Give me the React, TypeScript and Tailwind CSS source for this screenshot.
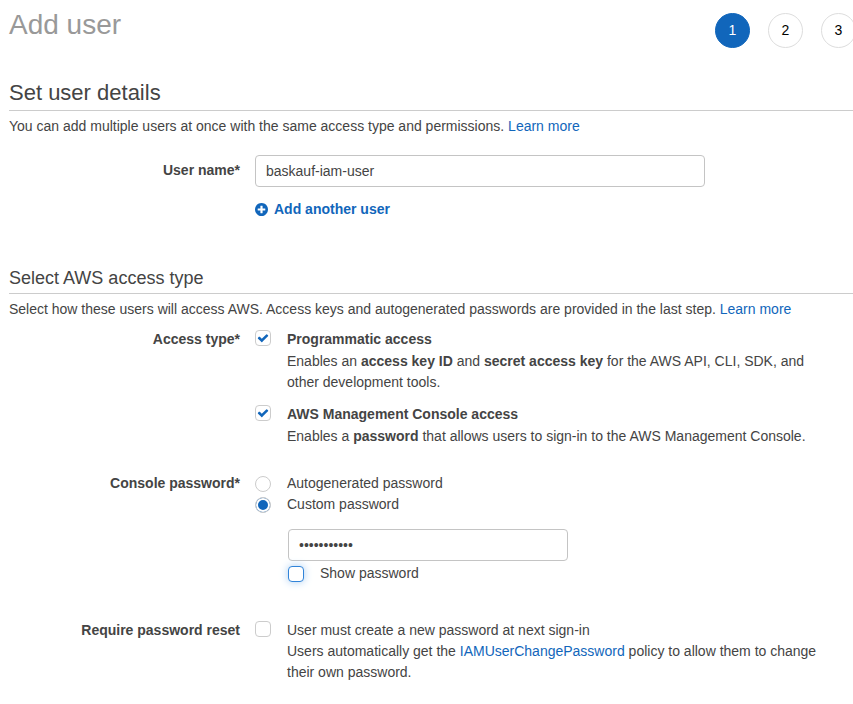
import { useState, type InputHTMLAttributes, type ReactNode } from 'react';

function PlusCircle() {
  return (
    <svg viewBox="128 128 1536 1536" className="size-[13px] fill-current" aria-hidden="true">
      <path d="M1344 960v-128q0-26-19-45t-45-19h-256v-256q0-26-19-45t-45-19h-128q-26 0-45 19t-19 45v256h-256q-26 0-45 19t-19 45v128q0 26 19 45t45 19h256v256q0 26 19 45t45 19h128q26 0 45-19t19-45v-256h256q26 0 45-19t19-45zm320-64q0 209-103 385.500t-279.500 279.500-385.500 103-385.500-103-279.500-279.500-103-385.500 103-385.500 279.500-279.500 385.500-103 385.500 103 279.500 279.500 103 385.500z" />
    </svg>
  );
}

function Checkbox({ highlighted = false, ...props }: InputHTMLAttributes<HTMLInputElement> & { highlighted?: boolean }) {
  return (
    <span className="mt-px grid size-4 shrink-0">
      <input
        type="checkbox"
        className={`peer col-start-1 row-start-1 size-4 appearance-none rounded border bg-white ${
          highlighted ? 'border-[#3184d9] shadow-[0_0_8px_#a8cdf2]' : 'border-[#ccc]'
        }`}
        {...props}
      />
      <svg
        viewBox="0 0 1792 1792"
        className="pointer-events-none invisible col-start-1 row-start-1 size-3 place-self-center fill-[#1166bb] peer-checked:visible"
        aria-hidden="true"
      >
        <path d="M1671 566q0 40-28 68l-724 724-136 136q-28 28-68 28t-68-28l-136-136-362-362q-28-28-28-68t28-68l136-136q28-28 68-28t68 28l294 295 656-657q28-28 68-28t68 28l136 136q28 28 28 68z" />
      </svg>
    </span>
  );
}

function Radio(props: InputHTMLAttributes<HTMLInputElement>) {
  return (
    <input
      type="radio"
      className="size-4 shrink-0 appearance-none rounded-full border border-[#ccc] bg-white checked:bg-[#1166bb] checked:shadow-[inset_0_0_0_2px_white]"
      {...props}
    />
  );
}

function Row({ label, htmlFor, children }: { label: string; htmlFor?: string; children: ReactNode }) {
  return (
    <div className="flex gap-[15px]">
      {htmlFor ? (
        <label htmlFor={htmlFor} className="w-[231px] shrink-0 pt-[5px] text-right font-bold">{label}</label>
      ) : (
        <span className="w-[231px] shrink-0 text-right font-bold">{label}</span>
      )}
      <div className="min-w-0 flex-1">{children}</div>
    </div>
  );
}

function Link({ children }: { children: ReactNode }) {
  return <a href="#" className="text-[#1166bb]">{children}</a>;
}

const circle = 'flex size-[35px] items-center justify-center rounded-full border';

export default function App() {
  const [show, setShow] = useState(false);
  return (
    <main className="min-h-screen overflow-x-hidden bg-white pl-[9px] font-['Liberation_Sans',Arial,sans-serif] text-sm leading-[21px] text-[#444]">
      <header className="flex justify-between">
        <h1 className="pt-[5px] text-[28px] leading-10 text-[#999]">Add user</h1>
        <ol className="-mr-[3px] flex gap-[18px] pt-[13px] text-black">
          <li className={`${circle} border-[#1166bb] bg-[#1166bb] text-white`}>1</li>
          <li className={`${circle} border-[#ddd]`}>2</li>
          <li className={`${circle} border-[#ddd]`}>3</li>
        </ol>
      </header>

      <section className="pt-[30px]">
        <h2 className="border-b border-[#ccc] pb-[2px] text-[22px] leading-[30px]">Set user details</h2>
        <p className="pt-[5px]">
          You can add multiple users at once with the same access type and permissions. <Link>Learn more</Link>
        </p>
        <div className="pt-[18px]">
          <Row label="User name*" htmlFor="user-name">
            <input
              id="user-name"
              defaultValue="baskauf-iam-user"
              className="block h-8 w-full max-w-[450px] rounded border border-[#c4c4c4] px-[10px]"
            />
            <button type="button" className="mt-3 flex items-center gap-[6px] font-bold text-[#1166bb]">
              <PlusCircle />
              Add another user
            </button>
          </Row>
        </div>
      </section>

      <section className="pt-[46px]">
        <h3 className="border-b border-[#ccc] pb-[2px] text-lg leading-[25px]">Select AWS access type</h3>
        <p className="pt-[5px]">
          Select how these users will access AWS. Access keys and autogenerated passwords are provided in the last step.{' '}
          <Link>Learn more</Link>
        </p>

        <div className="pt-[9px]">
          <Row label="Access type*">
            <label className="flex gap-4">
              <Checkbox defaultChecked />
              <span className="max-w-[540px]">
                <b className="block pb-px">Programmatic access</b>
                Enables an <b>access key ID</b> and <b>secret access key</b> for the AWS API, CLI, SDK, and other development tools.
              </span>
            </label>
            <label className="mt-[11px] flex gap-4">
              <Checkbox defaultChecked />
              <span className="max-w-[540px]">
                <b className="block pb-px">AWS Management Console access</b>
                Enables a <b>password</b> that allows users to sign-in to the AWS Management Console.
              </span>
            </label>
          </Row>
        </div>

        <div className="pt-[26px]">
          <Row label="Console password*">
            <label className="flex items-center gap-4">
              <Radio name="password" />
              Autogenerated password
            </label>
            <label className="flex items-center gap-4">
              <Radio name="password" defaultChecked />
              Custom password
            </label>
            <div className="pt-[14px] pl-[33px]">
              <input
                type={show ? 'text' : 'password'}
                aria-label="Custom password"
                defaultValue="password123"
                className="block h-8 w-full max-w-[280px] rounded border border-[#c4c4c4] px-[10px]"
              />
              <label className="mt-[2px] flex items-center gap-4">
                <Checkbox highlighted checked={show} onChange={(e) => setShow(e.target.checked)} />
                Show password
              </label>
            </div>
          </Row>
        </div>

        <div className="pt-9">
          <Row label="Require password reset">
            <label className="flex gap-4">
              <Checkbox />
              <span className="max-w-[540px]">
                User must create a new password at next sign-in
                <br />
                Users automatically get the <Link>IAMUserChangePassword</Link> policy to allow them to change their own password.
              </span>
            </label>
          </Row>
        </div>
      </section>
    </main>
  );
}
